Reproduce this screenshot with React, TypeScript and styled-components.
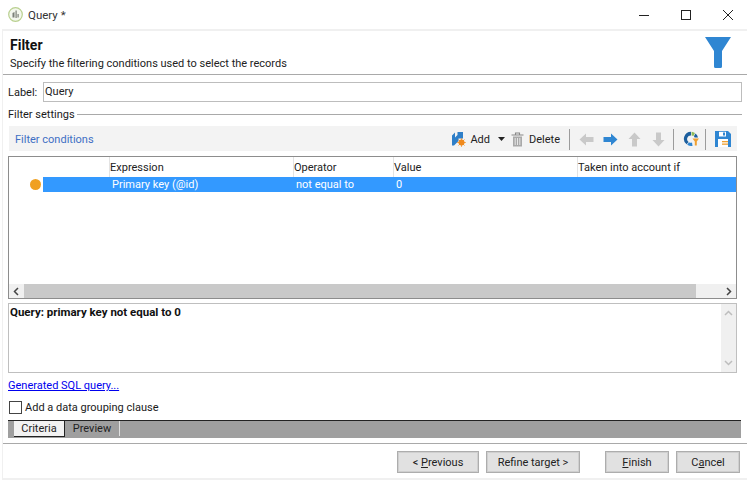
import React from "react";
import styled, { createGlobalStyle } from "styled-components";

const GlobalStyle = createGlobalStyle`
  html, body {
    margin: 0;
    padding: 0;
    background: #ffffff;
  }
  body {
    font-family: Roboto, "Open Sans", sans-serif;
    font-size: 11px;
    color: #1a1a1a;
  }
`;

const Window = styled.div`
  width: 750px;
  height: 482px;
  display: flex;
  flex-direction: column;
  overflow: hidden;
`;

const TitleBar = styled.div`
  height: 29px;
  display: flex;
  align-items: center;
  padding-left: 8px;
  font-size: 11.5px;
  color: #333;
  flex: none;
`;

const TitleText = styled.span`
  margin-left: 5px;
`;

const WindowButtons = styled.div`
  margin-left: auto;
  display: flex;
  align-items: center;
  gap: 32px;
  padding-right: 17px;
`;

const Panel = styled.div`
  flex: 1;
  margin: 0 3px 2px 2px;
  border-top: 2px solid #f0f0f0;
  border-left: 1px solid #f0f0f0;
  border-bottom: 2px solid #f0f0f0;
  display: flex;
  flex-direction: column;
  min-height: 0;
`;

const Header = styled.div`
  height: 37px;
  flex: none;
  border-bottom: 1px solid #a9a9a9;
  display: flex;
  justify-content: space-between;
  padding: 6px 16px 0 7px;
  box-sizing: content-box;
`;

const HeaderTitle = styled.div`
  font-size: 14px;
  font-weight: 700;
  line-height: 17px;
  color: #111;
`;

const HeaderSub = styled.div`
  line-height: 16px;
  margin-top: 2px;
  color: #222;
`;

const Body = styled.div`
  flex: 1;
  padding: 7px 5px 0 5px;
  display: flex;
  flex-direction: column;
  min-height: 0;
`;

const LabelRow = styled.div`
  display: flex;
  align-items: center;
  height: 20px;
  gap: 4px;
`;

const FieldLabel = styled.label`
  width: 31px;
`;

const TextInput = styled.div`
  flex: 1;
  height: 20px;
  box-sizing: border-box;
  border: 1px solid #bdbdbd;
  padding-left: 1px;
  line-height: 17px;
  color: #222;
`;

const SectionTitle = styled.div`
  display: flex;
  align-items: center;
  height: 14px;
  margin-top: 6px;
  gap: 2px;
  &::after {
    content: "";
    flex: 1;
    height: 1px;
    background: #a9a9a9;
  }
`;

const Toolbar = styled.div`
  height: 25px;
  width: 728px;
  margin: 5px 0 0 1px;
  flex: none;
  background: #f3f3f3;
  display: flex;
  align-items: center;
  padding: 1px 0 0 6px;
  box-sizing: border-box;
`;

const ToolbarTitle = styled.span`
  color: #3e6fc4;
  margin-right: auto;
`;

const ToolLabel = styled.span<{ $ml?: number }>`
  margin-left: ${({ $ml }) => $ml ?? 0}px;
  color: #222;
`;

const ToolIcon = styled.span<{ $ml?: number }>`
  display: flex;
  margin-left: ${({ $ml }) => $ml ?? 0}px;
`;

const ToolSeparator = styled.span<{ $ml: number }>`
  width: 1px;
  height: 21px;
  background: #9c9c9c;
  margin-left: ${({ $ml }) => $ml}px;
`;

const Grid = styled.div`
  width: 729px;
  height: 143px;
  margin-top: 5px;
  flex: none;
  box-sizing: border-box;
  border: 1px solid #8d8d8d;
  display: flex;
  flex-direction: column;
`;

const GridHead = styled.div`
  height: 20px;
  flex: none;
  display: grid;
  grid-template-columns: 100px 184px 100px 184px 1fr;
  line-height: 21px;
  color: #222;
`;

const HeadCell = styled.div`
  border-left: 1px solid #e3e3e3;
  &:first-child {
    border-left: none;
  }
`;

const GridRows = styled.div`
  flex: 1;
  min-height: 0;
`;

const GridRow = styled.div`
  display: flex;
  align-items: center;
  height: 15px;
`;

const Marker = styled.span`
  width: 11px;
  height: 11px;
  border-radius: 50%;
  background: #f0a020;
  margin-left: 21px;
  flex: none;
`;

const SelectedCells = styled.div`
  margin-left: 2px;
  flex: 1;
  height: 15px;
  background: #3399ff;
  color: #fff;
  display: grid;
  grid-template-columns: 184px 100px 1fr;
  padding-left: 69px;
  line-height: 15px;
`;

const HScroll = styled.div`
  height: 14px;
  flex: none;
  display: flex;
  background: #f0f0f0;
`;

const ScrollButton = styled.div`
  width: 15px;
  display: flex;
  align-items: center;
  justify-content: center;
  flex: none;
`;

const HThumb = styled.div`
  width: 672px;
  background: #c9c9c9;
`;

const HTrack = styled.div`
  flex: 1;
`;

const Summary = styled.div`
  width: 729px;
  height: 70px;
  margin-top: 4px;
  flex: none;
  box-sizing: border-box;
  border: 1px solid #bfbfbf;
  display: flex;
`;

const SummaryText = styled.div`
  flex: 1;
  font-weight: 700;
  font-size: 11.5px;
  line-height: 15px;
  padding: 1px 0 0 1px;
  color: #111;
`;

const VScroll = styled.div`
  width: 15px;
  background: #f0f0f0;
  display: flex;
  flex-direction: column;
  justify-content: space-between;
  align-items: center;
  padding: 5px 0;
  box-sizing: border-box;
`;

const SqlLink = styled.a`
  display: block;
  margin-top: 5px;
  height: 15px;
  line-height: 15px;
  color: #0000ee;
  text-decoration: underline;
`;

const CheckRow = styled.div`
  display: flex;
  align-items: center;
  gap: 3px;
  margin-top: 8px;
  height: 15px;
  padding-left: 1px;
`;

const CheckBox = styled.span`
  width: 11px;
  height: 11px;
  border: 1px solid #444;
  background: #fff;
  flex: none;
`;

const TabBar = styled.div`
  height: 18px;
  width: 733px;
  margin-top: 6px;
  flex: none;
  box-sizing: border-box;
  background: #9f9f9f;
  border-top: 1px solid #222;
  display: flex;
  padding-left: 6px;
`;

const Tab = styled.div<{ $active?: boolean }>`
  height: ${({ $active }) => ($active ? 16 : 15)}px;
  line-height: 15px;
  box-sizing: border-box;
  color: #222;
  background: ${({ $active }) => ($active ? "#f2f2f2" : "transparent")};
  width: ${({ $active }) => ($active ? 51 : 55)}px;
  text-align: center;
  border-right: 1px solid ${({ $active }) => ($active ? "#222" : "#e0e0e0")};
  border-bottom: ${({ $active }) => ($active ? "1px solid #222" : "none")};
`;

const Footer = styled.div`
  flex: none;
  height: 33px;
  margin: 5px -5px 0;
  border-top: 1px solid #a9a9a9;
  display: flex;
  align-items: flex-start;
  padding: 7px 7px 0 394px;
`;

const FootButton = styled.button<{ $w: number; $ml?: number }>`
  width: ${({ $w }) => $w}px;
  height: 22px;
  margin-left: ${({ $ml }) => $ml ?? 0}px;
  background: #e1e1e1;
  border: 1px solid #adadad;
  box-shadow: inset 0 0 0 1px #cfcfcf;
  font-family: inherit;
  font-size: 11px;
  color: #222;
  padding: 0;
  flex: none;
`;

const Mnemonic = styled.span`
  text-decoration: underline;
`;

const AppIcon = () => (
  <svg width="15" height="15" viewBox="0 0 15 15">
    <circle cx="7.5" cy="7.5" r="6.8" fill="#f4f7ee" stroke="#b9d08f" strokeWidth="1.2" />
    <path d="M4.5 10.5V6l2-1v5.5zM7.5 11V3.5h1.2V11zM9.5 10.5V7h1.2v3.5z" fill="#7b7f78" />
  </svg>
);

const FunnelIcon = () => (
  <svg width="26" height="31" viewBox="0 0 26 31">
    <path d="M0 0H26L17 14V29.5a1.5 1.5 0 0 1-1.5 1.5H10.5a1.5 1.5 0 0 1-1.5-1.5V14Z" fill="#2f86d2" />
  </svg>
);

const AddIcon = () => (
  <svg width="15" height="16" viewBox="0 0 15 16">
    <path d="M1 4.5 4 1.5V6.5L6.5 4V1H12V7.5H7.5V10L3 14.5H1Z" fill="#2f7fc8" />
    <circle cx="10.5" cy="11.5" r="3" fill="#f08a1d" />
    <path d="M10.5 7.2v8.6M6.2 11.5h8.6M7.5 8.5l6 6M13.5 8.5l-6 6" stroke="#f08a1d" strokeWidth="0.8" />
  </svg>
);

const TrashIcon = () => (
  <svg width="13" height="15" viewBox="0 0 13 15">
    <path d="M0.5 3H12.5M4.5 3V1H8.5V3" fill="none" stroke="#888" strokeWidth="1.1" />
    <path d="M2 4.5H11V14.5H2Z" fill="#a9a9a9" />
    <path d="M4.2 6V13M6.5 6V13M8.8 6V13" stroke="#eee" strokeWidth="0.9" />
  </svg>
);

const Arrow = ({ angle, color }: { angle: number; color: string }) => (
  <svg width="15" height="15" viewBox="0 0 15 15">
    <path d="M0.5 5H8V1.5L14.5 7.5 8 13.5V10H0.5Z" fill={color} transform={`rotate(${angle} 7.5 7.5)`} />
  </svg>
);

const RefreshIcon = () => (
  <svg width="16" height="16" viewBox="0 0 16 16">
    <path d="M8 0.8A7 7 0 0 0 3.6 13.3L5.6 10.9A3.6 3.6 0 0 1 8 4.4Z" fill="#1d5f9e" />
    <path d="M4.2 13.7A7 7 0 0 0 9.5 15L9 11.6A3.6 3.6 0 0 1 6 11.3Z" fill="#2f86d2" />
    <path d="M8.6 0.8A7 7 0 0 1 12 2L10.4 4.9A3.6 3.6 0 0 0 8.6 4.4Z" fill="#8dbb5a" />
    <path d="M12.5 2.4A7 7 0 0 1 15 6.5H11.6A3.6 3.6 0 0 0 10.9 5.3Z" fill="#1d5f9e" />
    <path d="M9.5 7.5H16L13.8 10.5V14.5H11.8V10.5Z" fill="#f0a030" />
  </svg>
);

const SaveIcon = () => (
  <svg width="16" height="16" viewBox="0 0 16 16">
    <path d="M0 0H13L16 3V16H0Z" fill="#2f86d2" />
    <rect x="4" y="0.8" width="7" height="4.7" fill="#fff" />
    <rect x="8" y="1.5" width="2" height="3" fill="#2f86d2" />
    <rect x="3" y="8" width="10" height="8" fill="#fff" />
    <rect x="7" y="10" width="6" height="1.3" fill="#f0a030" />
    <rect x="7" y="12.5" width="6" height="1.3" fill="#f0a030" />
  </svg>
);

const Chevron = ({ angle, color = "#444" }: { angle: number; color?: string }) => (
  <svg width="9" height="9" viewBox="0 0 9 9">
    <path d="M6 1 2.5 4.5 6 8" fill="none" stroke={color} strokeWidth="1.5" transform={`rotate(${angle} 4.5 4.5)`} />
  </svg>
);

export default function App() {
  return (
    <Window>
      <GlobalStyle />
      <TitleBar>
        <AppIcon />
        <TitleText>Query *</TitleText>
        <WindowButtons>
          <svg width="10" height="10" viewBox="0 0 10 10">
            <path d="M0 5.5H10" stroke="#222" strokeWidth="1" />
          </svg>
          <svg width="10" height="10" viewBox="0 0 10 10">
            <rect x="0.5" y="0.5" width="9" height="9" fill="none" stroke="#222" strokeWidth="1" />
          </svg>
          <svg width="10" height="10" viewBox="0 0 10 10">
            <path d="M0 0 10 10M10 0 0 10" stroke="#222" strokeWidth="1" />
          </svg>
        </WindowButtons>
      </TitleBar>
      <Panel>
        <Header>
          <div>
            <HeaderTitle>Filter</HeaderTitle>
            <HeaderSub>Specify the filtering conditions used to select the records</HeaderSub>
          </div>
          <FunnelIcon />
        </Header>
        <Body>
          <LabelRow>
            <FieldLabel>Label:</FieldLabel>
            <TextInput>Query</TextInput>
          </LabelRow>
          <SectionTitle>Filter settings</SectionTitle>
          <Toolbar>
            <ToolbarTitle>Filter conditions</ToolbarTitle>
            <ToolIcon><AddIcon /></ToolIcon>
            <ToolLabel $ml={4}>Add</ToolLabel>
            <ToolIcon $ml={8}>
              <svg width="7" height="4" viewBox="0 0 7 4"><path d="M0 0H7L3.5 4Z" fill="#222" /></svg>
            </ToolIcon>
            <ToolIcon $ml={6}><TrashIcon /></ToolIcon>
            <ToolLabel $ml={5}>Delete</ToolLabel>
            <ToolSeparator $ml={9} />
            <ToolIcon $ml={9}><Arrow angle={180} color="#c9c9c9" /></ToolIcon>
            <ToolIcon $ml={9}><Arrow angle={0} color="#2f86d2" /></ToolIcon>
            <ToolIcon $ml={9}><Arrow angle={270} color="#c9c9c9" /></ToolIcon>
            <ToolIcon $ml={9}><Arrow angle={90} color="#c9c9c9" /></ToolIcon>
            <ToolSeparator $ml={7} />
            <ToolIcon $ml={9}><RefreshIcon /></ToolIcon>
            <ToolSeparator $ml={6} />
            <ToolIcon $ml={9}><SaveIcon /></ToolIcon>
            <ToolIcon $ml={6} />
          </Toolbar>
          <Grid>
            <GridHead>
              <HeadCell />
              <HeadCell>Expression</HeadCell>
              <HeadCell>Operator</HeadCell>
              <HeadCell>Value</HeadCell>
              <HeadCell>Taken into account if</HeadCell>
            </GridHead>
            <GridRows>
              <GridRow>
                <Marker />
                <SelectedCells>
                  <span>Primary key (@id)</span>
                  <span>not equal to</span>
                  <span>0</span>
                </SelectedCells>
              </GridRow>
            </GridRows>
            <HScroll>
              <ScrollButton><Chevron angle={0} /></ScrollButton>
              <HThumb />
              <HTrack />
              <ScrollButton><Chevron angle={180} /></ScrollButton>
            </HScroll>
          </Grid>
          <Summary>
            <SummaryText>Query: primary key not equal to 0</SummaryText>
            <VScroll>
              <Chevron angle={90} color="#bdbdbd" />
              <Chevron angle={270} color="#bdbdbd" />
            </VScroll>
          </Summary>
          <SqlLink>Generated SQL query...</SqlLink>
          <CheckRow>
            <CheckBox />
            Add a data grouping clause
          </CheckRow>
          <TabBar>
            <Tab $active>Criteria</Tab>
            <Tab>Preview</Tab>
          </TabBar>
          <Footer>
            <FootButton $w={82}>&lt; <Mnemonic>P</Mnemonic>revious</FootButton>
            <FootButton $w={94} $ml={7}>Refine target &gt;</FootButton>
            <FootButton $w={64} $ml={25}><Mnemonic>F</Mnemonic>inish</FootButton>
            <FootButton $w={64} $ml={7}>C<Mnemonic>a</Mnemonic>ncel</FootButton>
          </Footer>
        </Body>
      </Panel>
    </Window>
  );
}
